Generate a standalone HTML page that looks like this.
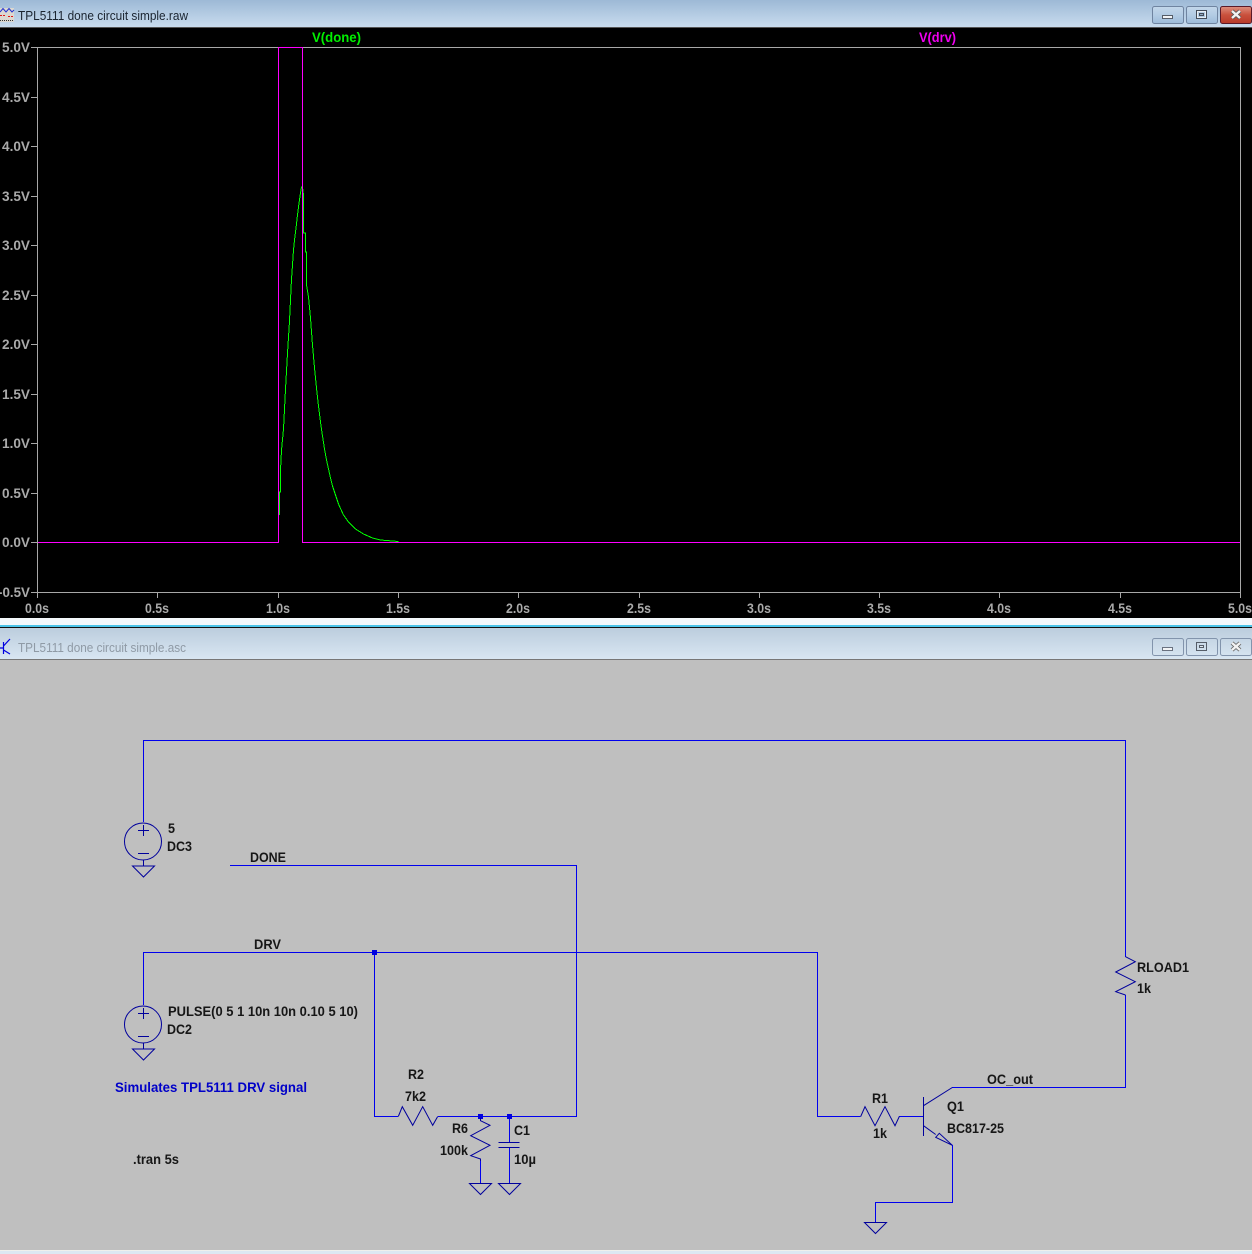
<!DOCTYPE html>
<html><head><meta charset="utf-8"><title>TPL5111 done circuit simple</title>
<style>
html,body{margin:0;padding:0;background:#dde8f2;width:1252px;height:1254px;overflow:hidden}
svg{display:block}
text{font-family:"Liberation Sans",sans-serif}
.t{font-size:13.5px;font-weight:bold;fill:#161616}
.ax{font-size:13.5px;font-weight:bold;fill:#aaaaaa}
.w{fill:none;stroke:#0000ee;stroke-width:1}
.c{fill:none;stroke:#00009c;stroke-width:1}
</style></head><body>
<svg width="1252" height="1254" viewBox="0 0 1252 1254" xmlns="http://www.w3.org/2000/svg">
<defs>
<linearGradient id="g1" x1="0" y1="0" x2="0" y2="1"><stop offset="0" stop-color="#9db9d6"/><stop offset="1" stop-color="#c9dcee"/></linearGradient>
<linearGradient id="g2" x1="0" y1="0" x2="0" y2="1"><stop offset="0" stop-color="#bccddd"/><stop offset="1" stop-color="#d8e6f2"/></linearGradient>
<linearGradient id="bt" x1="0" y1="0" x2="0" y2="1"><stop offset="0" stop-color="#c3d7ea"/><stop offset=".5" stop-color="#b3cce4"/><stop offset="1" stop-color="#9dbbd9"/></linearGradient>
<linearGradient id="cl" x1="0" y1="0" x2="0" y2="1"><stop offset="0" stop-color="#dd9080"/><stop offset=".5" stop-color="#c9503c"/><stop offset="1" stop-color="#b83a2a"/></linearGradient>
</defs>

<!-- Top window -->
<rect x="0" y="0" width="1252" height="27" fill="url(#g1)"/>
<rect x="0" y="27" width="1252" height="1" fill="#555"/>
<rect x="0" y="28" width="1252" height="590" fill="#000"/>
<rect x="0" y="618" width="1252" height="7" fill="#f4f8fb"/>
<rect x="0" y="625" width="1252" height="2" fill="#4cc4e8"/>
<rect x="0" y="627" width="1252" height="1" fill="#111"/>

<!-- top icon -->
<rect x="0" y="8" width="14" height="14" fill="#dcd8d0"/>
<path d="M0 12L3 8.5L6 12L9 8.5L12 12L14 10" fill="none" stroke="#2030d0"/>
<path d="M0 15.5h5M8 16.5h5" stroke="#e01818" stroke-dasharray="2 1"/>
<path d="M0 20.5h14" stroke="#333" stroke-dasharray="1 1"/>
<text x="18" y="20" font-size="13" fill="#1a2430" textLength="170" lengthAdjust="spacingAndGlyphs">TPL5111 done circuit simple.raw</text>

<!-- top buttons -->
<rect x="1152.5" y="6.5" width="31" height="17" rx="2" fill="url(#bt)" stroke="#6f84a0"/>
<rect x="1186.5" y="6.5" width="31" height="17" rx="2" fill="url(#bt)" stroke="#6f84a0"/>
<rect x="1220.5" y="6.5" width="31" height="17" rx="2" fill="url(#cl)" stroke="#5a1a28"/>
<rect x="1162.5" y="15.5" width="10" height="3" fill="#f2f4f6" stroke="#555d68"/>
<rect x="1196.5" y="10.5" width="10" height="8" fill="none" stroke="#444c58"/>
<rect x="1197.5" y="11.5" width="8" height="6" fill="none" stroke="#e8eef4"/>
<rect x="1199.5" y="13.5" width="4" height="2" fill="#8fa8c0" stroke="#444c58"/>
<path d="M1232 11L1240 18M1240 11L1232 18" stroke="#555" stroke-width="4"/>
<path d="M1232 11L1240 18M1240 11L1232 18" stroke="#f2f2f2" stroke-width="2.4"/>

<!-- Plot frame -->
<g stroke="#a8a8a8" stroke-width="1" fill="none" shape-rendering="crispEdges">
<rect x="37.5" y="47.5" width="1203" height="545"/>
<path d="M31 47.5h6M31 97.5h6M31 146.5h6M31 196.5h6M31 245.5h6M31 295.5h6M31 344.5h6M31 394.5h6M31 443.5h6M31 493.5h6M31 542.5h6M31 592.5h6"/>
<path d="M37.5 592v6M157.5 592v6M278.5 592v6M398.5 592v6M518.5 592v6M639.5 592v6M759.5 592v6M879.5 592v6M999.5 592v6M1120.5 592v6M1240.5 592v6"/>
</g>
<g>
<text class="ax" x="2" y="52" textLength="28" lengthAdjust="spacingAndGlyphs">5.0V</text>
<text class="ax" x="2" y="102" textLength="28" lengthAdjust="spacingAndGlyphs">4.5V</text>
<text class="ax" x="2" y="151" textLength="28" lengthAdjust="spacingAndGlyphs">4.0V</text>
<text class="ax" x="2" y="201" textLength="28" lengthAdjust="spacingAndGlyphs">3.5V</text>
<text class="ax" x="2" y="250" textLength="28" lengthAdjust="spacingAndGlyphs">3.0V</text>
<text class="ax" x="2" y="300" textLength="28" lengthAdjust="spacingAndGlyphs">2.5V</text>
<text class="ax" x="2" y="349" textLength="28" lengthAdjust="spacingAndGlyphs">2.0V</text>
<text class="ax" x="2" y="399" textLength="28" lengthAdjust="spacingAndGlyphs">1.5V</text>
<text class="ax" x="2" y="448" textLength="28" lengthAdjust="spacingAndGlyphs">1.0V</text>
<text class="ax" x="2" y="498" textLength="28" lengthAdjust="spacingAndGlyphs">0.5V</text>
<text class="ax" x="2" y="547" textLength="28" lengthAdjust="spacingAndGlyphs">0.0V</text>
<text class="ax" x="-2" y="597" textLength="32" lengthAdjust="spacingAndGlyphs">-0.5V</text>
<text class="ax" x="25" y="613" textLength="24" lengthAdjust="spacingAndGlyphs">0.0s</text>
<text class="ax" x="145" y="613" textLength="24" lengthAdjust="spacingAndGlyphs">0.5s</text>
<text class="ax" x="266" y="613" textLength="24" lengthAdjust="spacingAndGlyphs">1.0s</text>
<text class="ax" x="386" y="613" textLength="24" lengthAdjust="spacingAndGlyphs">1.5s</text>
<text class="ax" x="506" y="613" textLength="24" lengthAdjust="spacingAndGlyphs">2.0s</text>
<text class="ax" x="627" y="613" textLength="24" lengthAdjust="spacingAndGlyphs">2.5s</text>
<text class="ax" x="747" y="613" textLength="24" lengthAdjust="spacingAndGlyphs">3.0s</text>
<text class="ax" x="867" y="613" textLength="24" lengthAdjust="spacingAndGlyphs">3.5s</text>
<text class="ax" x="987" y="613" textLength="24" lengthAdjust="spacingAndGlyphs">4.0s</text>
<text class="ax" x="1108" y="613" textLength="24" lengthAdjust="spacingAndGlyphs">4.5s</text>
<text class="ax" x="1228" y="613" textLength="24" lengthAdjust="spacingAndGlyphs">5.0s</text>
</g>
<text x="312" y="42" font-size="14" font-weight="bold" fill="#00f000" textLength="49" lengthAdjust="spacingAndGlyphs">V(done)</text>
<text x="919" y="42" font-size="14" font-weight="bold" fill="#f000f0" textLength="37" lengthAdjust="spacingAndGlyphs">V(drv)</text>

<!-- Traces -->
<polyline fill="none" stroke="#00ff00" stroke-width="1" shape-rendering="crispEdges" points="279.5,515 279.5,492 280.5,492 280.5,470 281.5,450 283.5,429 285.5,389 287.5,353 289.5,321 291.5,279 292.5,265 293.5,250 294.5,240 295.5,232 296.5,224 297.5,215 298.5,207 299.5,200 300.5,193 301.5,187 302.5,187 303.5,195 303.5,233 305.5,233 305.5,252 306.5,252 306.5,285 308.5,297 310.5,318 312.5,345 314.5,368 316.5,388 318.5,406 320.5,422 322.5,436 324.5,449 326.5,460 328.5,469 330.5,478 332.5,486 335.5,495 338.5,504 343.5,515 348.5,522 355.5,529 363.5,534 372.5,538 380.5,540 398.5,541.5"/>
<path fill="none" stroke="#ff00ff" stroke-width="1" shape-rendering="crispEdges" d="M38 542.5H278.5V47.5H302.5V542.5H1240"/>

<!-- Bottom window -->
<rect x="0" y="628" width="1252" height="31" fill="url(#g2)"/>
<rect x="0" y="659" width="1252" height="1" fill="#777"/>
<rect x="0" y="660" width="1252" height="590" fill="#bfbfbf"/>
<rect x="0" y="1250" width="1252" height="1" fill="#f0f0ec"/>
<rect x="0" y="1251" width="1252" height="3" fill="#dde8f2"/>

<!-- bottom icon -->
<path d="M0 648h3M3.5 642v12M3.5 646L10 639M3.5 650L10 654" fill="none" stroke="#0000e0" stroke-width="1.2"/>
<text x="18" y="652" font-size="13" fill="#8f9aa5" textLength="168" lengthAdjust="spacingAndGlyphs">TPL5111 done circuit simple.asc</text>
<g fill="none" stroke="#8294ac">
<rect x="1152.5" y="638.5" width="31" height="17" rx="2"/>
<rect x="1186.5" y="638.5" width="31" height="17" rx="2"/>
<rect x="1220.5" y="638.5" width="31" height="17" rx="2"/>
</g>
<rect x="1162.5" y="647.5" width="10" height="3" fill="#f2f4f6" stroke="#6a7280"/>
<rect x="1196.5" y="642.5" width="10" height="8" fill="none" stroke="#555d68"/>
<rect x="1199.5" y="645.5" width="4" height="2" fill="#dfe8f0" stroke="#555d68"/>
<path d="M1232 643L1240 650M1240 643L1232 650" stroke="#666" stroke-width="4"/>
<path d="M1232 643L1240 650M1240 643L1232 650" stroke="#f2f2f2" stroke-width="2.4"/>

<!-- Wires -->
<g class="w" shape-rendering="crispEdges">
<path d="M143.5 822V740.5H1125.5V957"/>
<path d="M230 865.5H576.5V1116.5H438"/>
<path d="M143.5 1005V952.5H817.5V1116.5H860.5"/>
<path d="M374.5 952.5V1116.5H398"/>
<path d="M1125.5 995V1087.5H952"/>
<path d="M952.5 1145V1202.5H875.5V1222"/>
<path d="M899 1116.5H923"/>
<path d="M480.5 1160V1183M509.5 1116V1142M509.5 1147V1183"/>
</g>
<rect x="372" y="950" width="5" height="5" fill="#0000e0"/>
<rect x="478" y="1114" width="5" height="5" fill="#0000e0"/>
<rect x="507" y="1114" width="5" height="5" fill="#0000e0"/>

<!-- Components -->
<g class="c">
<circle cx="143" cy="841.5" r="18.5"/>
<path d="M138 830.5h11M143.5 825v11M138 853.5h11M143.5 860v6"/>
<path d="M132.5 866H154.5L143.5 877Z"/>
<circle cx="143" cy="1024.5" r="18.5"/>
<path d="M138 1013.5h11M143.5 1008v11M138 1036.5h11M143.5 1043v6"/>
<path d="M132.5 1049H154.5L143.5 1060Z"/>
<path d="M398.3 1116.5L402.3 1106.7L412.7 1125.3L422.7 1106.7L432.7 1125.3L437.7 1116.5"/>
<path d="M480.5 1118V1120.7L490 1125.3L470.7 1135.7L490 1145.3L470.7 1155.7L480.5 1159V1161"/>
<path d="M469.5 1183.5H491.5L480.5 1194.5Z"/>
<path d="M498.5 1142.5H519.5M498.5 1147.5H519.5"/>
<path d="M498.5 1183.5H520.5L509.5 1194.5Z"/>
<path d="M860.7 1116.5L865 1106.7L875 1125.7L885 1106.7L895 1125.7L899.3 1116.5"/>
<path d="M923.5 1097V1136"/>
<path d="M923.5 1105.7L952.3 1087.5"/>
<path d="M923.5 1125.7L935.7 1134.5"/>
<path d="M935.7 1137.3L939.3 1133.3L952.3 1145.3Z"/>
<path d="M864.5 1222.5H886.5L875.5 1233.5Z"/>
<path d="M1125.5 956.7L1135.3 961.7L1115.7 972L1135.3 981.7L1115.7 991.7L1125.5 995"/>
</g>

<!-- Labels -->
<text class="t" x="168" y="833" textLength="7" lengthAdjust="spacingAndGlyphs">5</text>
<text class="t" x="167" y="851" textLength="25" lengthAdjust="spacingAndGlyphs">DC3</text>
<text class="t" x="250" y="862" textLength="36" lengthAdjust="spacingAndGlyphs">DONE</text>
<text class="t" x="254" y="949" textLength="27" lengthAdjust="spacingAndGlyphs">DRV</text>
<text class="t" x="168" y="1016" textLength="190" lengthAdjust="spacingAndGlyphs">PULSE(0 5 1 10n 10n 0.10 5 10)</text>
<text class="t" x="167" y="1034" textLength="25" lengthAdjust="spacingAndGlyphs">DC2</text>
<text class="t" style="fill:#0000c8" x="115" y="1092" textLength="192" lengthAdjust="spacingAndGlyphs">Simulates TPL5111 DRV signal</text>
<text class="t" x="133" y="1164" textLength="46" lengthAdjust="spacingAndGlyphs">.tran 5s</text>
<text class="t" x="408" y="1079" textLength="16" lengthAdjust="spacingAndGlyphs">R2</text>
<text class="t" x="405" y="1101" textLength="21" lengthAdjust="spacingAndGlyphs">7k2</text>
<text class="t" x="452" y="1133" textLength="16" lengthAdjust="spacingAndGlyphs">R6</text>
<text class="t" x="440" y="1155" textLength="28" lengthAdjust="spacingAndGlyphs">100k</text>
<text class="t" x="514" y="1135" textLength="16" lengthAdjust="spacingAndGlyphs">C1</text>
<text class="t" x="514" y="1164" textLength="22" lengthAdjust="spacingAndGlyphs">10µ</text>
<text class="t" x="872" y="1103" textLength="16" lengthAdjust="spacingAndGlyphs">R1</text>
<text class="t" x="873" y="1138" textLength="14" lengthAdjust="spacingAndGlyphs">1k</text>
<text class="t" x="947" y="1111" textLength="17" lengthAdjust="spacingAndGlyphs">Q1</text>
<text class="t" x="947" y="1133" textLength="57" lengthAdjust="spacingAndGlyphs">BC817-25</text>
<text class="t" x="987" y="1084" textLength="46" lengthAdjust="spacingAndGlyphs">OC_out</text>
<text class="t" x="1137" y="972" textLength="52" lengthAdjust="spacingAndGlyphs">RLOAD1</text>
<text class="t" x="1137" y="993" textLength="14" lengthAdjust="spacingAndGlyphs">1k</text>
</svg>
</body></html>
